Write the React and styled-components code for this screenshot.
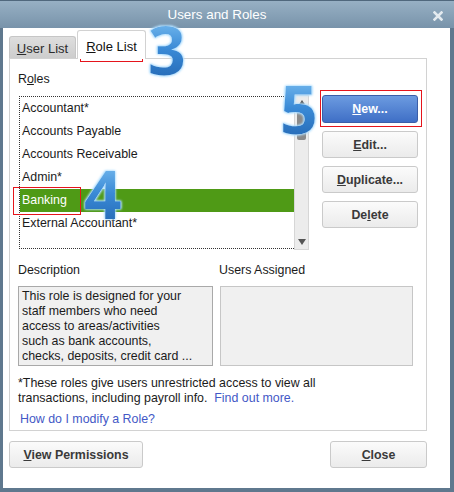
import React from "react";
import styled, { createGlobalStyle, css } from "styled-components";

const Global = createGlobalStyle`
  html, body { margin: 0; padding: 0; background: #fff; }
  body { font-family: "Liberation Sans", Arial, sans-serif; font-size: 12.4px; color: #1b1b1b; }
  * { box-sizing: border-box; }
`;

const Window = styled.div`
  width: 454px;
  height: 492px;
  display: flex;
  flex-direction: column;
  position: relative;
  overflow: hidden;
  background: #5f788e;
`;

const TitleBar = styled.div`
  height: 28px;
  flex: none;
  display: flex;
  align-items: center;
  justify-content: center;
  padding-right: 20px;
  background: linear-gradient(#97b0c4, #7893aa);
  border-top: 1px solid #50687d;
  color: #fff;
  font-size: 13.4px;
  position: relative;
`;

const CloseIcon = styled.svg`
  position: absolute;
  right: 11px;
  top: 10px;
  width: 10px;
  height: 10px;
`;

const Body = styled.div`
  flex: 1;
  margin: 0 4px 4px 3px;
  background: #fff;
  padding: 2px 0 0 6px;
  display: flex;
  flex-direction: column;
`;

const TabStrip = styled.div`
  height: 28px;
  display: flex;
  align-items: flex-end;
  position: relative;
  z-index: 1;
`;

const Tab = styled.div`
  display: flex;
  align-items: center;
  justify-content: center;
  font-size: 13px;
  border: 1px solid #c6c6c6;
  border-bottom: none;
  border-radius: 3px 3px 0 0;
  ${(p) =>
    p.$active
      ? css`
          width: 69px;
          height: 29px;
          margin-bottom: -1px;
          margin-left: 1px;
          background: #fff;
          color: #111;
          padding-top: 3px;
          border-color: #d2d2d2;
        `
      : css`
          width: 67px;
          height: 22px;
          background: linear-gradient(#dedede, #cdcdcd);
          color: #2c2c2c;
          padding-top: 1px;
        `}
`;

const U = styled.span`
  text-decoration: underline;
`;

const Panel = styled.div`
  width: 418px;
  height: 373px;
  border: 1px solid #d2d2d2;
  padding: 13px 0 0 8px;
  display: flex;
  flex-direction: column;
`;

const Label = styled.div`
  line-height: 14px;
  height: 14px;
  color: #1b1b1b;
`;

const ListRow = styled.div`
  display: flex;
  margin-top: 9px;
  gap: 13px;
`;

const ListFrame = styled.div`
  display: flex;
  margin-left: 1px;
  width: 290px;
  height: 155px;
`;

const ListItems = styled.div`
  flex: 1;
  margin-top: 1px;
  height: 153px;
  border: 1px dotted #333;
  border-right: none;
`;

const Item = styled.div`
  height: 23px;
  line-height: 23px;
  padding-left: 2px;
  white-space: nowrap;
  ${(p) =>
    p.$selected &&
    css`
      background: #4f9a16;
      color: #fff;
    `}
`;

const ScrollBar = styled.div`
  width: 15px;
  height: 155px;
  background: #ececec;
  border: 1px solid #d6d6d6;
  display: flex;
  flex-direction: column;
  align-items: center;
  justify-content: space-between;
  padding: 4px 0 4px;
`;

const Arrow = styled.div`
  width: 0;
  height: 0;
  border-left: 4px solid transparent;
  border-right: 4px solid transparent;
  ${(p) =>
    p.$up
      ? css`border-bottom: 6px solid #555;`
      : css`border-top: 6px solid #555;`}
`;

const Thumb = styled.div`
  width: 9px;
  height: 32px;
  background: #8a8a8a;
  border-radius: 2px;
  margin-top: 2px;
`;

const ScrollTop = styled.div`
  display: flex;
  flex-direction: column;
  align-items: center;
`;

const ButtonCol = styled.div`
  display: flex;
  flex-direction: column;
  gap: 8px;
`;

const Button = styled.button`
  font-family: "Liberation Sans", Arial, sans-serif;
  font-size: 12.4px;
  font-weight: bold;
  width: ${(p) => p.$w || 96}px;
  height: 27px;
  border-radius: 3px;
  padding: 0;
  cursor: default;
  ${(p) =>
    p.$primary
      ? css`
          height: 28px;
          color: #fff;
          background: linear-gradient(#6c9be0, #3f6fc6);
          border: 1px solid #3a5ea8;
        `
      : css`
          color: #3a3a3a;
          background: linear-gradient(#fbfbfb, #ebebeb);
          border: 1px solid #cacaca;
        `}
`;

const InfoLabels = styled.div`
  display: grid;
  grid-template-columns: 201px 193px;
  margin-top: 13px;
`;

const Boxes = styled.div`
  display: grid;
  grid-template-columns: 195px 193px;
  column-gap: 7px;
  margin-top: 9px;
`;

const InfoBox = styled.div`
  height: 80px;
  background: #f0f0f0;
  border: 1px solid ${(p) => (p.$dark ? "#a9a9a9" : "#c6c6c6")};
  padding: 2px 0 0 3px;
  line-height: 15px;
  color: #1b1b1b;
  white-space: nowrap;
  overflow: hidden;
`;

const Note = styled.div`
  margin-top: 10px;
  line-height: 15px;
  color: #1b1b1b;
  white-space: nowrap;
`;

const Link = styled.a`
  color: #4358c6;
  text-decoration: none;
  cursor: pointer;
  ${(p) =>
    p.$block &&
    css`
      display: block;
      margin: 6px 0 0 2px;
      line-height: 14px;
    `}
`;

const BottomRow = styled.div`
  width: 418px;
  display: flex;
  justify-content: space-between;
  margin-top: 10px;
`;

const RedBox = styled.div`
  position: absolute;
  border: 1px solid #e5141b;
  pointer-events: none;
`;

const Step = styled.span`
  position: absolute;
  font-family: "Open Sans", "DejaVu Sans", sans-serif;
  font-weight: 700;
  font-size: 66px;
  line-height: 1;
  background: linear-gradient(#7cc0f2, #3a8ad6 50%, #2468b4);
  -webkit-background-clip: text;
  background-clip: text;
  color: transparent;
  filter: drop-shadow(0 0 0.7px #e8f6ff) drop-shadow(0 0 0.7px #c8eaff)
    drop-shadow(0 0 0.9px #a6dbff) drop-shadow(0 0 1.2px #b4e0ff);
  pointer-events: none;
`;

const roles = [
  "Accountant*",
  "Accounts Payable",
  "Accounts Receivable",
  "Admin*",
  "Banking",
  "External Accountant*",
];

export default function App() {
  return (
    <>
      <Global />
      <Window>
        <TitleBar>
          Users and Roles
          <CloseIcon viewBox="0 0 10 10">
            <path
              d="M1.5 1.5 L8.5 8.5 M8.5 1.5 L1.5 8.5"
              stroke="#e3eaef"
              strokeWidth="2.6"
              strokeLinecap="square"
            />
          </CloseIcon>
        </TitleBar>
        <Body>
          <TabStrip>
            <Tab>
              <span>
                <U>U</U>ser List
              </span>
            </Tab>
            <Tab $active>
              <span>
                <U>R</U>ole List
              </span>
            </Tab>
          </TabStrip>
          <Panel>
            <Label>
              R<U>o</U>les
            </Label>
            <ListRow>
              <ListFrame>
                <ListItems>
                  {roles.map((r) => (
                    <Item key={r} $selected={r === "Banking"}>
                      {r}
                    </Item>
                  ))}
                </ListItems>
                <ScrollBar>
                  <ScrollTop>
                    <Arrow $up />
                    <Thumb />
                  </ScrollTop>
                  <Arrow />
                </ScrollBar>
              </ListFrame>
              <ButtonCol>
                <Button $primary>
                  <U>N</U>ew...
                </Button>
                <Button>
                  <U>E</U>dit...
                </Button>
                <Button>
                  <U>D</U>uplicate...
                </Button>
                <Button>
                  De<U>l</U>ete
                </Button>
              </ButtonCol>
            </ListRow>
            <InfoLabels>
              <Label>Description</Label>
              <Label>Users Assigned</Label>
            </InfoLabels>
            <Boxes>
              <InfoBox $dark>
                This role is designed for your
                <br />
                staff members who need
                <br />
                access to areas/activities
                <br />
                such as bank accounts,
                <br />
                checks, deposits, credit card ...
              </InfoBox>
              <InfoBox />
            </Boxes>
            <Note>
              *These roles give users unrestricted access to view all
              <br />
              transactions, including payroll info.&nbsp; <Link>Find out more.</Link>
            </Note>
            <Link $block>How do I modify a Role?</Link>
          </Panel>
          <BottomRow>
            <Button $w={134}>
              <U>V</U>iew Permissions
            </Button>
            <Button $w={97}>
              <U>C</U>lose
            </Button>
          </BottomRow>
        </Body>

        <RedBox style={{ left: 80, top: 31, width: 63, height: 31 }} />
        <RedBox style={{ left: 320, top: 90, width: 102, height: 37 }} />
        <RedBox style={{ left: 13, top: 187, width: 68, height: 28 }} />
        <Step style={{ left: 148, top: 16 }}>3</Step>
        <Step style={{ left: 84, top: 160 }}>4</Step>
        <Step style={{ left: 280, top: 75 }}>5</Step>
      </Window>
    </>
  );
}
